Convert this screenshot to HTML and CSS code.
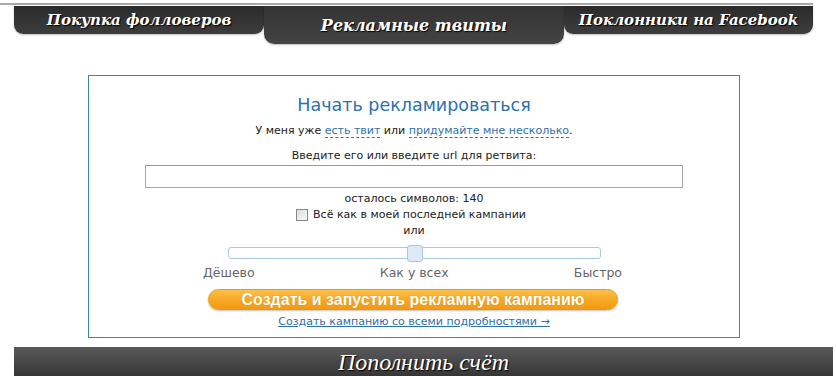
FILE: index.html
```html
<!DOCTYPE html>
<html lang="ru">
<head>
  <meta charset="UTF-8">
  <title>Рекламные твиты</title>
  <link rel="stylesheet" href="styles.css">
</head>
<body>

<div class="topline"></div>

<nav class="tabs">
  <a class="tab" href="#">Покупка фолловеров</a>
  <a class="tab active" href="#">Рекламные твиты</a>
  <a class="tab" href="#">Поклонники на Facebook</a>
</nav>

<div class="promo">
  <h2>Начать рекламироваться</h2>
  <p class="choice">У меня уже <a href="#" class="dashed">есть твит</a> или <a href="#" class="dashed">придумайте мне несколько</a>.</p>
  <p class="label">Введите его или введите url для ретвита:</p>
  <input type="text" class="tweet">
  <p class="counter">осталось символов: 140</p>
  <label class="same"><span class="box"></span>Всё как в моей последней кампании</label>
  <p class="or">или</p>

  <div class="slider">
    <div class="track"><div class="handle"></div></div>
    <div class="marks">
      <span>Дёшево</span>
      <span>Как у всех</span>
      <span>Быстро</span>
    </div>
  </div>

  <button class="go">Создать и запустить рекламную кампанию</button>
  <a href="#" class="details">Создать кампанию со всеми подробностями →</a>
</div>

<div class="bar">Пополнить счёт</div>

</body>
</html>
```

FILE: styles.css
```css
body {
  margin: 0;
  padding: 0;
  background: white;
  font-family: "DejaVu Sans", Verdana, sans-serif;
  font-size: 11px;
  color: #222;
}
.topline {
  margin-top: 3px;
  width: 813px;
  height: 2px;
  background: #a9a9a9;
}
.tabs {
  display: flex;
  align-items: flex-start;
  margin: 1px 0 0 14px;
}
.tab {
  display: block;
  width: 250px;
  height: 28px;
  line-height: 28px;
  text-align: center;
  color: white;
  text-decoration: none;
  font-family: "DejaVu Serif", "Liberation Serif", serif;
  font-weight: bold;
  font-style: italic;
  font-size: 15px;
  text-shadow: 1px 1px 1px #000;
  background: linear-gradient(#2b2b2b, #3d3d3d);
  border-radius: 0 0 9px 9px;
  box-shadow: 0 1px 2px rgba(0,0,0,0.25);
}
.tab.active {
  width: 300px;
  height: 38px;
  line-height: 40px;
  font-size: 16px;
  background: linear-gradient(#333, #444);
  border-radius: 0 0 10px 10px;
}
.tabs .tab:last-child {
  width: 249px;
}
.promo {
  width: 650px;
  margin: 31px 0 0 88px;
  border: 1px solid #3f83b3;
  text-align: center;
  padding: 17px 0 8px;
}
.promo h2 {
  margin: 0;
  font-weight: normal;
  font-size: 17.5px;
  line-height: 24px;
  color: #2d70ad;
}
.promo p {
  margin: 0;
}
.choice {
  margin-top: 6px !important;
  line-height: 16px;
}
.dashed {
  color: #2d70ad;
  text-decoration: none;
  border-bottom: 1px dashed #2d70ad;
}
.label {
  margin-top: 9px !important;
  line-height: 16px;
}
.tweet {
  display: block;
  box-sizing: border-box;
  width: 538px;
  height: 23px;
  margin: 1px auto 0 56px;
  border: 1px solid #a7a7a7;
  border-top-color: #999;
}
.counter {
  margin-top: 3px !important;
  line-height: 16px;
}
.same {
  display: flex;
  align-items: center;
  justify-content: center;
  line-height: 16px;
  margin-right: 6px;
}
.box {
  width: 10px;
  height: 10px;
  margin-right: 5px;
  border: 1px solid #888;
  background: linear-gradient(135deg, #ddd, #fafafa);
}
.or {
  line-height: 16px;
}
.slider {
  width: 419px;
  margin: 0 auto 0 114px;
}
.track {
  position: relative;
  width: 371px;
  height: 10px;
  margin: 8px 0 0 25px;
  border: 1px solid #a9c9e2;
  border-radius: 3px;
  background: white;
}
.handle {
  position: absolute;
  left: 178px;
  top: -3px;
  width: 14px;
  height: 15px;
  border: 1px solid #aac8e2;
  border-radius: 3px;
  background: #dce9f6;
}
.marks {
  display: flex;
  justify-content: space-between;
  margin-top: 6px;
  font-size: 12.5px;
  line-height: 16px;
  color: #666;
}
.go {
  display: block;
  width: 410px;
  height: 21px;
  margin: 8px 0 0 119px;
  padding: 0;
  border: 1px solid #e99a10;
  border-radius: 11px;
  background: linear-gradient(#fcc04a, #f7a51f 60%, #f39a12);
  box-shadow: 0 1px 2px rgba(0,0,0,0.25);
  color: white;
  font-family: "Liberation Sans", Arial, sans-serif;
  font-weight: bold;
  font-size: 16px;
  line-height: 19px;
  text-shadow: 0 0 1px #c77d00;
}
.details {
  display: inline-block;
  margin-top: 4px;
  line-height: 15px;
  color: #2d70ad;
  text-decoration: underline;
}
.bar {
  width: 819px;
  height: 31px;
  margin: 9px 0 0 14px;
  background: linear-gradient(#5a5a5a, #333);
  color: white;
  text-align: center;
  line-height: 31px;
  font-family: "Liberation Serif", "DejaVu Serif", serif;
  font-style: italic;
  font-size: 24px;
  text-shadow: 1px 1px 1px #000;
}
```
